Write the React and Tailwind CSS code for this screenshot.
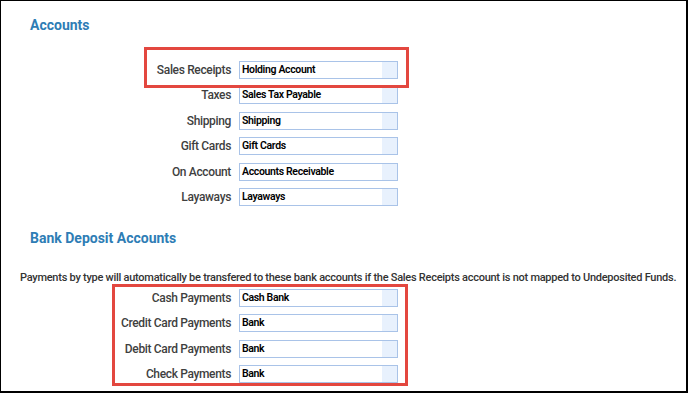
import React from "react";

const accountRows = [
  { label: "Sales Receipts", value: "Holding Account" },
  { label: "Taxes", value: "Sales Tax Payable" },
  { label: "Shipping", value: "Shipping" },
  { label: "Gift Cards", value: "Gift Cards" },
  { label: "On Account", value: "Accounts Receivable" },
  { label: "Layaways", value: "Layaways" },
];

const bankRows = [
  { label: "Cash Payments", value: "Cash Bank" },
  { label: "Credit Card Payments", value: "Bank" },
  { label: "Debit Card Payments", value: "Bank" },
  { label: "Check Payments", value: "Bank" },
];

// one label + fake select box
const AccountRow = ({ label, value }) => (
  <div className="flex items-center h-[18px]">
    <div className="w-[230px] text-right text-[12px] font-medium tracking-[-0.35px] text-[#3f3f3f] leading-none whitespace-nowrap">
      {label}
    </div>
    <div className="ml-2 w-[159px] h-[18px] flex border border-[#a9c3e8] bg-white">
      <span className="flex-1 pl-[2px] text-[10.5px] font-semibold tracking-[-0.35px] text-black leading-[16px] whitespace-nowrap">
        {value}
      </span>
      <span className="w-[15px] bg-[#e8f1fd]" />
    </div>
  </div>
);

const App = () => {
  return (
    <div
      className="relative w-[688px] h-[393px] bg-white border-l border-t border-r-2 border-b-2 border-black overflow-hidden"
      style={{ fontFamily: "Roboto, 'Liberation Sans', sans-serif" }}
    >
      <h2 className="mt-[14px] ml-[29px] text-[14px] leading-[20px] font-bold text-[#2e7db5]">Accounts</h2>

      <div className="mt-[26px] flex flex-col gap-y-[7.4px]">
        {accountRows.map((row) => (
          <AccountRow key={row.label} {...row} />
        ))}
      </div>

      <h2 className="mt-[22px] ml-[29px] text-[14px] leading-[20px] font-bold text-[#2e7db5]">Bank Deposit Accounts</h2>

      <p className="mt-[22px] ml-[19px] whitespace-nowrap text-[11px] tracking-[-0.26px] leading-[16px] font-medium text-[#333]">
        Payments by type will automatically be transfered to these bank accounts if the Sales Receipts account is not mapped to Undeposited Funds.
      </p>

      <div className="mt-[3px] flex flex-col gap-y-[7.4px]">
        {bankRows.map((row) => (
          <AccountRow key={row.label} {...row} />
        ))}
      </div>

      {/* red annotation boxes */}
      <div className="absolute left-[143px] top-[46px] w-[265px] h-[41px] border-[3px] border-[#e3473f]" />
      <div className="absolute left-[111px] top-[283px] w-[296px] h-[102px] border-[3px] border-[#e3473f]" />
    </div>
  );
};

export default App;
